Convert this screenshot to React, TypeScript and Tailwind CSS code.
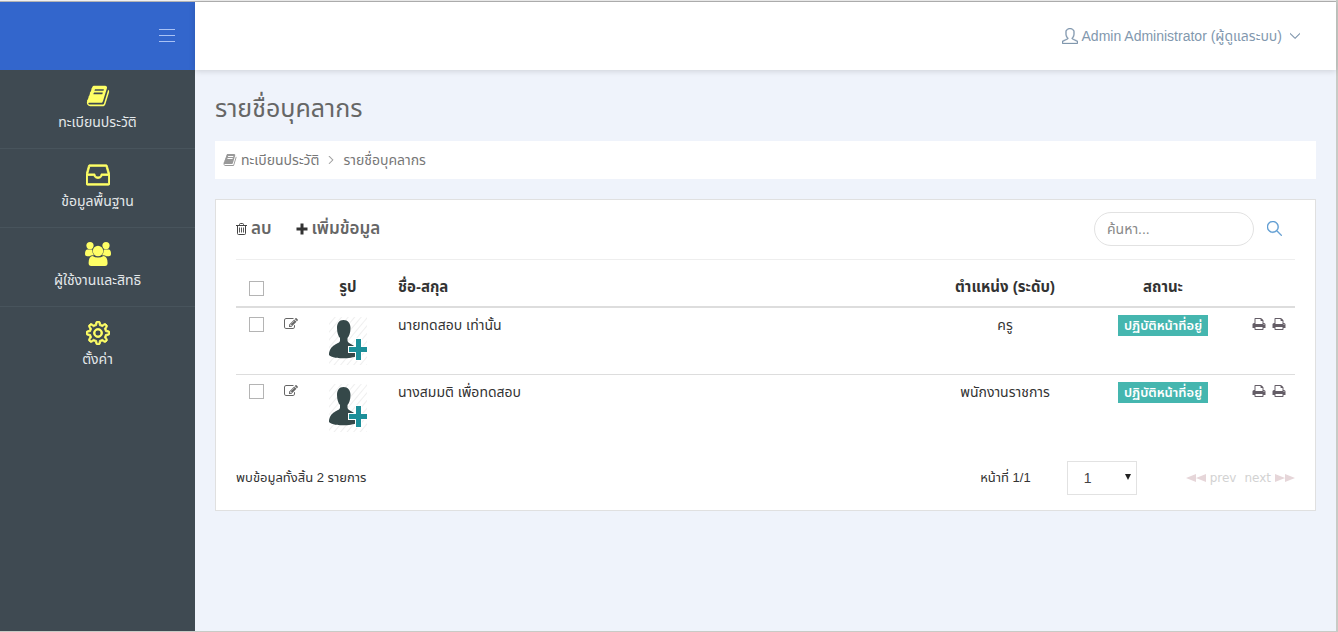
import React from 'react';
import { SlArrowDown, SlDrawer, SlMagnifier, SlSettings, SlUser } from 'react-icons/sl';

interface IconProps {
  className?: string;
}

const BookIcon: React.FC<IconProps> = ({ className }) => (
  <svg className={className} viewBox="0 0 1792 1792" fill="currentColor" aria-hidden="true">
    <path d="M1703 478q40 57 18 129l-275 906q-19 64-76.5 107.5t-122.5 43.5h-923q-77 0-148.5-53.5t-99.5-131.5q-24-67-2-127 0-4 3-27t4-37q1-8-3-21.5t-3-19.5q2-11 8-21t16.5-23.5 16.5-23.5q23-38 45-91.5t30-91.5q3-10 .5-30t-.5-28q3-11 17-28t17-23q21-36 42-92t25-90q1-9-2.5-32t.5-28q4-13 22-30.5t22-22.5q19-26 42.5-84.5t27.5-96.5q1-8-3-25.5t-2-26.5q2-8 9-18t18-23 17-21q8-12 16.5-30.5t15-35 16-36 19.5-32 26.5-23.5 36-11.5 47.5 5.5l-1 3q38-9 51-9h761q74 0 114 56t18 130l-274 906q-36 119-71.5 153.5t-128.5 34.5h-869q-27 0-38 15-11 16-1 43 24 70 144 70h923q29 0 56-15.5t35-41.5l300-987q7-22 5-57 38 15 59 43zm-1064 2q-4 13 2 22.5t20 9.5h608q13 0 25.5-9.5t16.5-22.5l21-64q4-13-2-22.5t-20-9.5h-608q-13 0-25.5 9.5t-16.5 22.5zm-83 256q-4 13 2 22.5t20 9.5h608q13 0 25.5-9.5t16.5-22.5l21-64q4-13-2-22.5t-20-9.5h-608q-13 0-25.5 9.5t-16.5 22.5z" />
  </svg>
);

const PrintIcon: React.FC<IconProps> = ({ className }) => (
  <svg className={className} viewBox="0 0 1792 1792" fill="currentColor" aria-hidden="true">
    <path d="M448 1536h896v-256h-896v256zm0-640h896v-384h-160q-40 0-68-28t-28-68v-160h-640v640zm1152 64q0-26-19-45t-45-19-45 19-19 45 19 45 45 19 45-19 19-45zm128 0v416q0 13-9.5 22.5t-22.5 9.5h-224v160q0 40-28 68t-68 28h-960q-40 0-68-28t-28-68v-160h-224q-13 0-22.5-9.5t-9.5-22.5v-416q0-79 56.5-135.5t135.5-56.5h64v-544q0-40 28-68t68-28h672q40 0 88 20t76 48l152 152q28 28 48 76t20 88v256h64q79 0 135.5 56.5t56.5 135.5z" />
  </svg>
);

const EditIcon: React.FC<IconProps> = ({ className }) => (
  <svg className={className} viewBox="0 0 1792 1792" fill="currentColor" aria-hidden="true">
    <path d="M888 1184l116-116-152-152-116 116v56h96v96h56zm440-720q-16-16-33 1l-350 350q-17 17-1 33t33-1l350-350q17-17 1-33zm80 594v190q0 119-84.5 203.5t-203.5 84.5h-832q-119 0-203.5-84.5t-84.5-203.5v-832q0-119 84.5-203.5t203.5-84.5h832q63 0 117 25 15 7 18 23 3 17-9 29l-49 49q-14 14-32 8-23-6-45-6h-832q-66 0-113 47t-47 113v832q0 66 47 113t113 47h832q66 0 113-47t47-113v-126q0-13 9-22l64-64q15-15 35-7t20 29zm-96-738l288 288-672 672h-288v-288zm444 132l-92 92-288-288 92-92q28-28 68-28t68 28l152 152q28 28 28 68t-28 68z" />
  </svg>
);

const UsersIcon: React.FC<IconProps> = ({ className }) => (
  <svg className={className} viewBox="0 0 26 24" fill="currentColor" aria-hidden="true">
    <circle cx="5" cy="3.6" r="3.6" />
    <circle cx="21" cy="3.6" r="3.6" />
    <path d="M2 7.600h5.200Q7.200 11 9 13.200Q6 13 4.600 14.200H2.200Q0 14.200 0 12Q0 8.400 2 7.600z" />
    <path d="M24 7.600h-5.200Q18.800 11 17 13.200Q20 13 21.400 14.200H23.800Q26 14.200 26 12Q26 8.400 24 7.600z" />
    <circle cx="13" cy="9" r="5.2" />
    <path d="M7.600 14Q10 15.600 13 15.600Q16 15.600 18.400 14Q22.600 14.400 22.600 21Q22.600 24 20 24H6.200Q3.600 24 3.600 21Q3.600 14.400 7.600 14z" />
  </svg>
);

const TrashIcon: React.FC<IconProps> = ({ className }) => (
  <svg className={className} viewBox="0 0 11 12" fill="none" stroke="currentColor" aria-hidden="true">
    <path d="M0 2.500h11M3.500 2.500v-1q0-1 1-1h2q1 0 1 1v1M1.500 2.500v8q0 1 1 1h6q1 0 1-1v-8" />
    <path d="M3.500 4.500v5M5.500 4.500v5M7.500 4.500v5" strokeWidth="0.9" />
  </svg>
);

const AddPhoto: React.FC = () => (
  <svg className="mx-auto block h-12 w-10" viewBox="0 0 40 48" role="img" aria-label="เพิ่มรูป">
    <defs>
      <pattern id="stripes" width="5" height="5" patternUnits="userSpaceOnUse" patternTransform="rotate(40)">
        <rect width="1" height="5" fill="#efefef" />
      </pattern>
    </defs>
    <rect x="1" width="38" height="48" fill="url(#stripes)" />
    <path d="M15.500 3C11 3 9 6.500 9 11C9 16 10.500 19.500 12 21V24C11 27.500 1.500 27 1 38C5 42.500 23 42 29 39V32C26 27 21 27.500 19.500 24V21C21 19.500 22.500 16 22.500 11C22.500 6.500 20 3 15.500 3z" fill="#354849" />
    <path d="M27 21h7v8h6v7h-6v8h-7v-8h-7v-7h7z" fill="#fff" />
    <path d="M28 22h5v8h6v5h-6v8h-5v-8h-7v-5h7z" fill="#1c8f99" />
  </svg>
);

const menus = [
  { label: 'ทะเบียนประวัติ', icon: <BookIcon className="h-6 w-6" /> },
  { label: 'ข้อมูลพื้นฐาน', icon: <SlDrawer className="h-6 w-6 stroke-current [stroke-width:36]" /> },
  { label: 'ผู้ใช้งานและสิทธิ', icon: <UsersIcon className="h-6 w-[26px]" /> },
  { label: 'ตั้งค่า', icon: <SlSettings className="h-6 w-6 stroke-current [stroke-width:36]" /> },
];

const people = [
  { name: 'นายทดสอบ เท่านั้น', position: 'ครู', status: 'ปฏิบัติหน้าที่อยู่' },
  { name: 'นางสมมติ เพื่อทดสอบ', position: 'พนักงานราชการ', status: 'ปฏิบัติหน้าที่อยู่' },
];

const checkboxClasses = "block h-[15px] w-[15px] appearance-none border border-[#b4b4b4] bg-white checked:bg-[#3366cc]";

const Sidebar: React.FC = () => (
  <aside className="w-[195px] shrink-0 bg-[#3f4a52]">
    <div className="flex h-17 items-center justify-end bg-[#3366cc] pr-5 pb-0.5">
      <button type="button" aria-label="เมนู" className="flex flex-col gap-[5px]">
        <span className="h-px w-4 bg-[#a9c2f5]" />
        <span className="h-px w-4 bg-[#a9c2f5]" />
        <span className="h-px w-4 bg-[#a9c2f5]" />
      </button>
    </div>
    <nav>
      {menus.map(m => (
        <a key={m.label} href="#" className="flex h-[79px] flex-col items-center border-b border-[#48545c] pt-3.5 text-sm leading-5 text-[#e4e8ea] last:border-b-0">
          <span className="mb-1 text-[#ffff66]">{m.icon}</span>
          {m.label}
        </a>
      ))}
    </nav>
  </aside>
);

const PeopleTable: React.FC = () => (
  <table className="w-full table-fixed border-collapse text-sm text-[#333]">
    <colgroup>
      <col className="w-10" />
      <col className="w-[30px]" />
      <col className="w-[84px]" />
      <col />
      <col className="w-[180px]" />
      <col className="w-[136px]" />
      <col className="w-16" />
    </colgroup>
    <thead>
      <tr className="h-[47px] border-b-2 border-[#ddd] text-[15px]">
        <th className="pt-2.5 pl-[13px]"><input type="checkbox" aria-label="เลือกทั้งหมด" className={checkboxClasses} /></th>
        <th />
        <th className="pt-2">รูป</th>
        <th className="pt-2 pl-2 text-left">ชื่อ-สกุล</th>
        <th className="pt-2">ตำแหน่ง (ระดับ)</th>
        <th className="pt-2">สถานะ</th>
        <th />
      </tr>
    </thead>
    <tbody>
      {people.map(p => (
        <tr key={p.name} className="h-[67px] border-b border-[#ddd] align-top last:border-b-0">
          <td className="pt-[9px] pl-[13px]"><input type="checkbox" aria-label={p.name} className={checkboxClasses} /></td>
          <td className="pt-[9px] pl-2">
            <button type="button" aria-label="แก้ไข" className="block text-[#666]"><EditIcon className="h-3.5 w-3.5" /></button>
          </td>
          <td className="pt-[9px]"><AddPhoto /></td>
          <td className="pt-[7px] pl-2 leading-5">{p.name}</td>
          <td className="pt-[7px] text-center leading-5">{p.position}</td>
          <td className="pt-[7px] text-center">
            <span className="mx-auto block h-[21px] w-fit bg-[#45b6af] px-1.5 text-[13px] leading-[21px] font-semibold whitespace-nowrap text-white">{p.status}</span>
          </td>
          <td className="pt-[9px]">
            <div className="flex justify-end gap-1.5 pr-[9px] text-[#645d66]">
              <button type="button" aria-label="พิมพ์"><PrintIcon className="h-3.5 w-3.5" /></button>
              <button type="button" aria-label="พิมพ์ทั้งหมด"><PrintIcon className="h-3.5 w-3.5" /></button>
            </div>
          </td>
        </tr>
      ))}
    </tbody>
  </table>
);

const App: React.FC = () => {
  return (
    <div className="flex min-h-screen flex-col border-r-2 border-b border-[#c8cbc6] bg-[#eff3fb] font-['Liberation_Sans','Noto_Sans_Thai',sans-serif] text-[#333]">
      <div className="h-0.5 border-b border-[#b4b4b4] bg-[#f0f0f0]" />
      <div className="flex flex-1">
        <Sidebar />
        <div className="min-w-0 flex-1">
          <header className="flex h-17 items-center justify-end bg-white pr-9 shadow-[0_1px_6px_rgba(0,0,0,0.15)]">
            <button type="button" className="flex items-center text-sm text-[#8298ae]">
              <SlUser className="mr-1 h-4 w-4 stroke-current [stroke-width:20]" />
              Admin Administrator (ผู้ดูแลระบบ)
              <SlArrowDown className="ml-2 h-2.5 w-2.5 stroke-current [stroke-width:60]" />
            </button>
          </header>

          <main className="px-5 pt-5">
            <h1 className="text-[25px] leading-9 text-[#666]">รายชื่อบุคลากร</h1>
            <nav className="mt-[15px] flex h-[38px] items-center bg-white pl-2 text-sm text-[#777]">
              <BookIcon className="mr-1 h-3.5 w-3.5 text-[#999]" />
              <a href="#">ทะเบียนประวัติ</a>
              <SlArrowDown className="mx-2 h-2 w-2 -rotate-90 stroke-current text-[#999] [stroke-width:60]" />
              <span>รายชื่อบุคลากร</span>
            </nav>

            <section className="mt-5 border border-[#e0e0e0] bg-white px-5">
              <div className="flex h-[60px] items-center border-b border-[#eee] pb-0.5 text-[17px] font-semibold text-[#666]">
                <button type="button" className="flex items-center gap-1">
                  <TrashIcon className="h-3 w-[11px] text-[#444]" />
                  ลบ
                </button>
                <button type="button" className="ml-6 flex items-center gap-1">
                  <svg className="h-3 w-3 text-[#333]" viewBox="0 0 12 12" fill="currentColor" aria-hidden="true">
                    <path d="M4.500 0.500h3v4H11.500v3H7.500v4h-3v-4H0.500v-3h4z" />
                  </svg>
                  เพิ่มข้อมูล
                </button>
                <input
                  type="search"
                  aria-label="ค้นหา"
                  placeholder="ค้นหา..."
                  className="ml-auto h-[34px] w-40 rounded-full border border-[#e2e2e2] px-3 text-sm font-normal outline-none placeholder:text-[#888]"
                />
                <button type="button" aria-label="ค้นหา" className="mr-[13px] ml-[13px] text-[#5b9bd1]">
                  <SlMagnifier className="h-[15px] w-[15px] stroke-current [stroke-width:30]" />
                </button>
              </div>

              <PeopleTable />

              <div className="mt-5 mb-[15px] flex h-[34px] items-center text-[13px]">
                <span>พบข้อมูลทั้งสิ้น 2 รายการ</span>
                <label htmlFor="page" className="ml-auto">หน้าที่ 1/1</label>
                <div className="relative ml-9">
                  <select id="page" className="block h-[34px] w-[70px] appearance-none border border-[#e2e2e2] bg-white pl-4 text-sm text-[#444]">
                    <option>1</option>
                  </select>
                  <svg className="pointer-events-none absolute top-[13px] right-1.5 h-1.5 w-1.5 text-[#222]" viewBox="0 0 6 6" fill="currentColor"><path d="M0 0h6L3 6z" /></svg>
                </div>
                <div className="ml-[49px] flex gap-2 font-['DejaVu_Sans',sans-serif] text-xs text-[#d2d2d2]">
                  <button type="button" disabled className="flex items-center gap-1">
                    <svg className="h-2 w-5 text-[#e6d6d9]" viewBox="0 0 20 8" fill="currentColor" aria-hidden="true"><path d="M0 4L10 0v8zM10 4L20 0v8z" /></svg>
                    prev
                  </button>
                  <button type="button" disabled className="flex items-center gap-1">
                    next
                    <svg className="h-2 w-5 text-[#e6d6d9]" viewBox="0 0 20 8" fill="currentColor" aria-hidden="true"><path d="M0 0l10 4-10 4zM10 0l10 4-10 4z" /></svg>
                  </button>
                </div>
              </div>
            </section>
          </main>
        </div>
      </div>
    </div>
  );
};

export default App;
